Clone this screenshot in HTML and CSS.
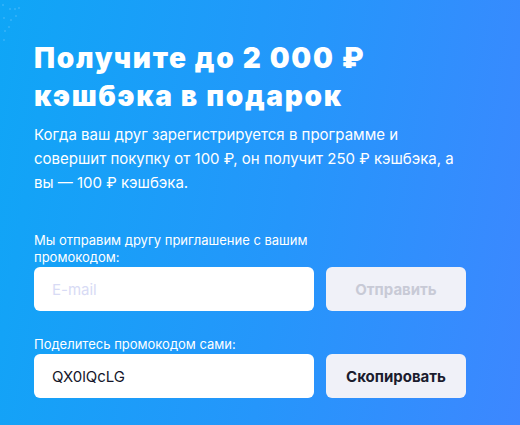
FILE: index.html
```html
<!DOCTYPE html>
<html>
<head>
    <meta charset="utf-8" />
    <title>Пригласите друга</title>
    <link rel="stylesheet" href="styles.css">
</head>
<body>
    <div class="promo">
        <svg class="dots" width="40" height="45" viewBox="0 0 40 45">
            <circle cx="3" cy="5" r="0.7"/>
            <circle cx="10" cy="9" r="0.7"/>
            <circle cx="15" cy="9" r="0.7"/>
            <circle cx="19" cy="8" r="0.7"/>
            <circle cx="4" cy="18" r="0.7"/>
            <circle cx="11" cy="20" r="0.7"/>
            <circle cx="16" cy="16" r="0.7"/>
            <circle cx="9" cy="27" r="0.7"/>
            <circle cx="5" cy="31" r="0.7"/>
            <circle cx="4" cy="40" r="0.7"/>
        </svg>
        <h1 class="title">Получите до 2&nbsp;000&nbsp;₽ кэшбэка в&nbsp;подарок</h1>
        <p class="text">Когда ваш друг зарегистрируется в программе и совершит покупку от 100&nbsp;₽, он получит 250&nbsp;₽ кэшбэка, а вы — 100&nbsp;₽ кэшбэка.</p>

        <div class="field">
            <div class="label">Мы отправим другу приглашение с вашим промокодом:</div>
            <div class="row">
                <input class="input" type="text" placeholder="E-mail">
                <button class="btn btn-disabled">Отправить</button>
            </div>
        </div>

        <div class="field">
            <div class="label">Поделитесь промокодом сами:</div>
            <div class="row">
                <input class="input" type="text" value="QX0lQcLG" readonly>
                <button class="btn">Скопировать</button>
            </div>
        </div>
    </div>
</body>
</html>
```

FILE: styles.css
```css
*{
    margin: 0;
    padding: 0;
    box-sizing: border-box;
}
body{
    font-family: Inter, "Noto Sans", sans-serif;
}
.promo{
    position: relative;
    width: 520px;
    height: 425px;
    padding: 39px 0 0 34px;
    background: linear-gradient(100deg, #0fa6f6 0%, #2596fb 55%, #3d87ff 100%);
    color: #fff;
    overflow: hidden;
}
.dots{
    position: absolute;
    left: 0;
    top: 0;
    fill: #7fd0ff;
    opacity: 0.7;
}
.title{
    width: 400px;
    font-size: 28px;
    line-height: 38px;
    font-weight: 900;
    letter-spacing: 1.7px;
}
.text{
    width: 420px;
    margin-top: 8px;
    font-size: 15px;
    line-height: 24px;
}
.field{
    margin-top: 37px;
}
.field + .field{
    margin-top: 25px;
}
.label{
    width: 290px;
    font-size: 13px;
    line-height: 17px;
    margin-bottom: 1px;
}
.row{
    display: flex;
    gap: 12px;
}
.input{
    width: 280px;
    height: 44px;
    padding: 0 18px;
    border: none;
    border-radius: 6px;
    background: #fff;
    font-family: inherit;
    font-size: 15px;
    color: #14162a;
    outline: none;
}
.input::placeholder{
    color: #d8dbf5;
}
.btn{
    width: 140px;
    height: 44px;
    border: none;
    border-radius: 6px;
    background: #f0f1f8;
    font-family: inherit;
    font-size: 15px;
    font-weight: 700;
    color: #1b1c2e;
    cursor: pointer;
}
.btn-disabled{
    color: #c8cad6;
    cursor: default;
}
```
